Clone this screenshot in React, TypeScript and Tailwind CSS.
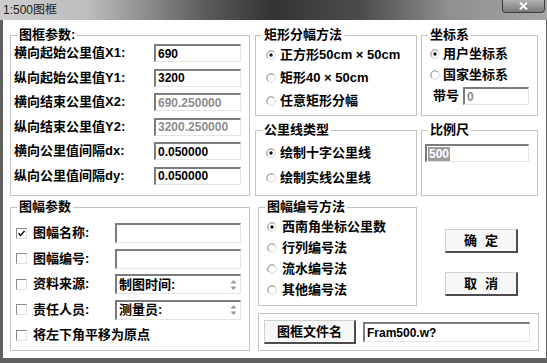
import React from "react";

const sunken =
  "bg-white border-t-2 border-l-2 border-r border-b border-t-[#7c7c7c] border-l-[#7c7c7c] border-r-[#e4e4e4] border-b-[#e4e4e4]";
const raised =
  "bg-[#f7f7f7] border-t border-l border-r-2 border-b-2 border-t-[#cfcfcf] border-l-[#cfcfcf] border-r-[#4d4d4d] border-b-[#4d4d4d]";

function Group({
  title,
  className,
  children,
}: {
  title: string;
  className: string;
  children?: React.ReactNode;
}) {
  return (
    <fieldset className={`border border-[#c4c4c4] ${className}`}>
      <legend className="ml-[6px] px-[2px] text-[13px] leading-[16px] font-bold">{title}</legend>
      {children}
    </fieldset>
  );
}

function Radio({ on }: { on?: boolean }) {
  return (
    <svg width="10" height="10" viewBox="0 0 10 10" className="shrink-0">
      <circle cx="5" cy="5" r="4.2" fill="#fff" stroke="#d4d4d4" strokeWidth="1" />
      <path d="M2 8 A4.2 4.2 0 0 1 8 2" fill="none" stroke="#959595" strokeWidth="1" />
      {on && <circle cx="5" cy="5" r="1.7" fill="#111" />}
    </svg>
  );
}

function Check({ on }: { on?: boolean }) {
  return (
    <span className="flex h-[11px] w-[11px] shrink-0 items-center justify-center bg-white border-t border-l border-r border-b border-t-[#8a8a8a] border-l-[#8a8a8a] border-r-[#e0e0e0] border-b-[#e0e0e0]">
      {on && (
        <svg width="9" height="9" viewBox="0 0 9 9">
          <path d="M1.5 4.3 L3.4 6.4 L7.6 2" stroke="#111" strokeWidth="1.5" fill="none" />
        </svg>
      )}
    </span>
  );
}

function Spin() {
  return (
    <svg width="9" height="14" viewBox="0 0 9 14" className="shrink-0">
      <path d="M4.5 2 L7.5 5.5 L1.5 5.5 Z" fill="#9a9a9a" />
      <path d="M1.5 8.5 L7.5 8.5 L4.5 12 Z" fill="#9a9a9a" />
    </svg>
  );
}

const frameRows = [
  { label: "横向起始公里值X1:", value: "690", off: false },
  { label: "纵向起始公里值Y1:", value: "3200", off: false },
  { label: "横向结束公里值X2:", value: "690.250000", off: true },
  { label: "纵向结束公里值Y2:", value: "3200.250000", off: true },
  { label: "横向公里值间隔dx:", value: "0.050000", off: false },
  { label: "纵向公里值间隔dy:", value: "0.050000", off: false },
];

export default function App() {
  return (
    <div className="flex h-[363px] w-[547px] flex-col overflow-hidden bg-[#5f5f5f] font-['Liberation_Sans','Noto_Sans_CJK_SC',sans-serif] text-black">
      {/* title bar */}
      <div className="flex h-[20px] shrink-0 bg-[linear-gradient(to_right,#cdcdcd_0%,#bdbdbd_16%,#5a5a5a_38%,#333333_50%,#4c4c4c_66%,#8f8f8f_82%,#a5a5a5_100%)]">
        <span className="pl-[3px] pt-[2px] text-[12px] leading-[16px] text-[#1c1c1c]">1:500图框</span>
        <div className="ml-auto mr-[2px] flex h-[13px] w-[43px] items-center justify-center rounded-b-[4px] border border-t-0 border-[#3f3f3f] bg-[linear-gradient(to_bottom,#b0b0b0,#7a7a7a)]">
          <svg width="9" height="8" viewBox="0 0 9 8">
            <path d="M1 0.5 L8 7.5 M8 0.5 L1 7.5" stroke="#fff" strokeWidth="2" />
          </svg>
        </div>
      </div>

      {/* client */}
      <div className="ml-[3px] mr-[1px] flex h-[338px] flex-col bg-white pl-[7px] pt-[7px]">
        {/* top section */}
        <div className="flex">
          <Group title="图框参数:" className="h-[169px] w-[240px]">
            <div className="ml-[3px] mt-[1px] flex h-[141px] flex-col justify-between">
              {frameRows.map((r) => (
                <div key={r.label} className="flex h-[18px] items-center">
                  <span className="w-[140px] text-[13px] font-bold leading-[16px]">{r.label}</span>
                  <div className={`flex h-[18px] w-[87px] items-center pl-[2px] text-[12px] font-bold ${sunken} ${r.off ? "text-[#8c8c8c]" : ""}`}>
                    {r.value}
                  </div>
                </div>
              ))}
            </div>
          </Group>

          <div className="ml-[5px] flex flex-col gap-[6px]">
            <div className="flex gap-[4px]">
              <Group title="矩形分幅方法" className="h-[89px] w-[162px]">
                <div className="flex flex-col text-[13px] font-bold">
                  {["正方形50cm × 50cm", "矩形40 × 50cm", "任意矩形分幅"].map((t, i) => (
                    <div key={t} className="flex h-[23px] items-center gap-[4px] pl-[10px]">
                      <Radio on={i === 0} />
                      <span>{t}</span>
                    </div>
                  ))}
                </div>
              </Group>
              <Group title="坐标系" className="h-[89px] w-[117px]">
                <div className="flex flex-col text-[13px] font-bold">
                  {["用户坐标系", "国家坐标系"].map((t, i) => (
                    <div key={t} className="flex h-[21px] items-center gap-[3px] pl-[8px]">
                      <Radio on={i === 0} />
                      <span>{t}</span>
                    </div>
                  ))}
                  <div className="mt-[2px] flex h-[18px] items-center pl-[11px]">
                    <span className="w-[30px]">带号</span>
                    <div className={`flex h-[18px] w-[66px] items-center pl-[2px] text-[12px] text-[#8c8c8c] ${sunken}`}>0</div>
                  </div>
                </div>
              </Group>
            </div>
            <div className="flex gap-[4px]">
              <Group title="公里线类型" className="h-[74px] w-[162px]">
                <div className="flex flex-col pt-[2px] text-[13px] font-bold">
                  {["绘制十字公里线", "绘制实线公里线"].map((t, i) => (
                    <div key={t} className="flex h-[25px] items-center gap-[4px] pl-[10px]">
                      <Radio on={i === 0} />
                      <span>{t}</span>
                    </div>
                  ))}
                </div>
              </Group>
              <Group title="比例尺" className="h-[74px] w-[117px]">
                <div className="pl-[3px] pt-[6px]">
                  <div className={`flex h-[18px] w-[104px] items-center pl-[1px] ${sunken}`}>
                    <span className="bg-[#9c9c9c] px-[1px] text-[12px] font-bold leading-[14px] text-white">500</span>
                  </div>
                </div>
              </Group>
            </div>
          </div>
        </div>

        {/* bottom section */}
        <div className="mt-[3px] flex">
          <Group title="图幅参数" className="h-[152px] w-[240px]">
            <div className="flex flex-col gap-[5.5px] pl-[5px] pt-[8px] text-[13px] font-bold">
              <div className="flex h-[20px] items-center">
                <Check on />
                <span className="ml-[6px] w-[82px]">图幅名称:</span>
                <div className={`h-[20px] w-[126px] ${sunken}`} />
              </div>
              <div className="flex h-[20px] items-center">
                <Check />
                <span className="ml-[6px] w-[82px]">图幅编号:</span>
                <div className={`h-[20px] w-[126px] ${sunken}`} />
              </div>
              <div className="flex h-[20px] items-center">
                <Check />
                <span className="ml-[6px] w-[82px]">资料来源:</span>
                <div className={`flex h-[20px] w-[126px] items-center justify-between pl-[2px] pr-[2px] ${sunken}`}>
                  <span>制图时间:</span>
                  <Spin />
                </div>
              </div>
              <div className="flex h-[20px] items-center">
                <Check />
                <span className="ml-[6px] w-[82px]">责任人员:</span>
                <div className={`flex h-[20px] w-[126px] items-center justify-between pl-[2px] pr-[2px] ${sunken}`}>
                  <span>测量员:</span>
                  <Spin />
                </div>
              </div>
              <div className="flex h-[20px] items-center">
                <Check />
                <span className="ml-[6px]">将左下角平移为原点</span>
              </div>
            </div>
          </Group>

          <div className="ml-[8px] flex w-[281px] flex-col">
            <div className="flex h-[107px]">
              <Group title="图幅编号方法" className="h-[107px] w-[159px]">
                <div className="flex flex-col pt-[1px] text-[13px] font-bold">
                  {["西南角坐标公里数", "行列编号法", "流水编号法", "其他编号法"].map((t, i) => (
                    <div key={t} className="flex h-[21px] items-center gap-[5px] pl-[8px]">
                      <Radio on={i === 0} />
                      <span>{t}</span>
                    </div>
                  ))}
                </div>
              </Group>
              <div className="ml-[28px] flex flex-col gap-[19px] pt-[30px] text-[13px] font-bold">
                <button className={`flex h-[24px] w-[73px] items-center justify-center gap-[8px] ${raised}`}>
                  <span>确</span>
                  <span>定</span>
                </button>
                <button className={`flex h-[24px] w-[73px] items-center justify-center gap-[8px] ${raised}`}>
                  <span>取</span>
                  <span>消</span>
                </button>
              </div>
            </div>
            <div className="mt-[7px] flex h-[38px] items-center border border-[#c4c4c4] pl-[5px]">
              <button className={`flex h-[24px] w-[92px] items-center justify-center text-[13px] font-bold ${raised}`}>
                图框文件名
              </button>
              <div className={`ml-[7px] flex h-[20px] w-[167px] items-center pl-[2px] text-[12px] font-bold ${sunken}`}>
                Fram500.w?
              </div>
            </div>
          </div>
        </div>
      </div>
    </div>
  );
}
